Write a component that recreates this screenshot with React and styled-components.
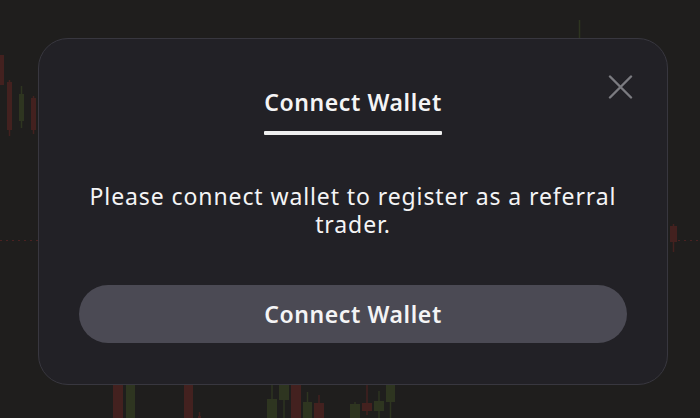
import React from "react";
import styled, { createGlobalStyle } from "styled-components";

const Global = createGlobalStyle`
  html, body { margin: 0; padding: 0; background: #1f1e1d; }
  body { font-family: "Noto Sans", "Liberation Sans", sans-serif; }
  * { box-sizing: border-box; }
`;

const Page = styled.div`
  position: relative;
  width: 700px;
  height: 418px;
  overflow: hidden;
  background: #1f1e1d;
  padding: 38px 0 0 38px;
`;

const Chart = styled.svg`
  position: absolute;
  inset: 0;
  width: 700px;
  height: 418px;
`;

const Modal = styled.div`
  position: relative;
  width: 630px;
  height: 347px;
  background: #222126;
  border: 1px solid #38373f;
  border-radius: 30px;
  padding: 49px 40px 0 40px;
  display: flex;
  flex-direction: column;
  align-items: center;
`;

const Close = styled.button`
  position: absolute;
  top: 36px;
  right: 34px;
  width: 25px;
  height: 25px;
  padding: 0;
  border: 0;
  background: transparent;
  cursor: pointer;
  display: flex;
`;

const Tab = styled.div`
  display: inline-flex;
  flex-direction: column;
  align-items: stretch;
  gap: 15px;
`;

const Title = styled.h2`
  margin: 0;
  font-size: 23px;
  line-height: 28px;
  letter-spacing: 0.6px;
  font-weight: 600;
  color: #f4f4f5;
  text-align: center;
`;

const Underline = styled.div`
  height: 4px;
  border-radius: 1px;
  background: #efefef;
`;

const Message = styled.p`
  margin: 47px 0 0;
  width: 100%;
  font-size: 23px;
  line-height: 28px;
  letter-spacing: 0.9px;
  font-weight: 400;
  color: #f4f4f5;
  text-align: center;
`;

const Button = styled.button`
  margin-top: 47px;
  width: 100%;
  height: 58px;
  border: 0;
  border-radius: 29px;
  background: #4b4a54;
  color: #f4f4f5;
  font-family: inherit;
  font-size: 23px;
  letter-spacing: 0.6px;
  font-weight: 600;
  cursor: pointer;
`;

const RED = "#43211f";
const GREEN = "#2e3520";

const candles = [
  // x, bodyTop, bodyBottom, wickTop, wickBottom, color, width
  [0, 55, 85, 55, 85, RED, 4],
  [7, 82, 130, 80, 136, RED, 5],
  [19, 94, 121, 86, 128, GREEN, 5],
  [31, 98, 130, 96, 134, RED, 5],
  [670, 226, 242, 224, 252, RED, 7],
  [113, 385, 418, 385, 418, RED, 10],
  [126, 385, 418, 385, 418, GREEN, 9],
  [184, 385, 418, 385, 418, RED, 9],
  [198, 416, 418, 412, 418, RED, 3],
  [267, 399, 418, 385, 418, GREEN, 10],
  [279, 385, 400, 385, 418, GREEN, 10],
  [291, 385, 418, 385, 418, RED, 10],
  [303, 402, 418, 392, 418, GREEN, 9],
  [314, 403, 418, 395, 418, RED, 10],
  [350, 404, 418, 402, 418, GREEN, 10],
  [362, 403, 411, 385, 415, RED, 10],
  [374, 401, 411, 391, 418, GREEN, 10],
  [386, 385, 402, 385, 418, GREEN, 9],
];

function ChartBackground() {
  return (
    <Chart viewBox="0 0 700 418" aria-hidden="true">
      <line x1="0" y1="240.5" x2="700" y2="240.5" stroke="#4a2222" strokeWidth="1" strokeDasharray="2 4" />
      <line x1="579.5" y1="20" x2="579.5" y2="40" stroke="#2e3520" strokeWidth="1.5" />
      {candles.map(([x, bt, bb, wt, wb, c, w], i) => (
        <g key={i}>
          <line x1={x + w / 2} y1={wt} x2={x + w / 2} y2={wb} stroke={c} strokeWidth="1.5" />
          <rect x={x} y={bt} width={w} height={Math.max(bb - bt, 1)} fill={c} />
        </g>
      ))}
    </Chart>
  );
}

export default function App() {
  return (
    <>
      <Global />
      <Page>
        <ChartBackground />
        <Modal>
          <Close aria-label="Close">
            <svg width="25" height="25" viewBox="0 0 25 25">
              <path d="M2 1.5 L23 22.5 M23 1.5 L2 22.5" stroke="#7b7b80" strokeWidth="2.4" strokeLinecap="round" fill="none" />
            </svg>
          </Close>
          <Tab>
            <Title>Connect Wallet</Title>
            <Underline />
          </Tab>
          <Message>Please connect wallet to register as a referral trader.</Message>
          <Button>Connect Wallet</Button>
        </Modal>
      </Page>
    </>
  );
}
